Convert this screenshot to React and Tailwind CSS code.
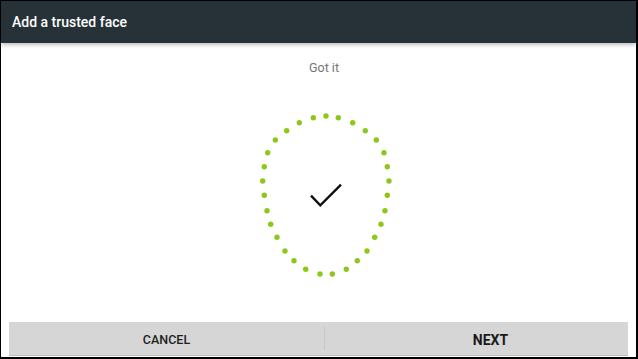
export default function App() {
  const dots = [
    [326, 116], [338.3, 117.7], [352.7, 122.7], [365.3, 130.7], [376.3, 140],
    [384, 152.7], [387.3, 166.7], [389, 181], [387.3, 195.3], [385, 210.7],
    [381, 224.3], [374.7, 237.3], [367, 251], [357.3, 260.7], [346.3, 269.3],
    [332.3, 274], [320, 274], [305.7, 269.3], [294, 260.7], [285, 251],
    [277, 237.3], [270.7, 224.3], [267, 210.7], [264.3, 195.3], [262.7, 181],
    [264.3, 166.7], [267.7, 152.7], [275.3, 140], [286.7, 130.7], [299.3, 122.7],
    [313.3, 117.7]
  ];

  return (
    <div
      className="w-[638px] h-[359px] flex flex-col bg-white border-t border-l border-r-2 border-b-2 border-black overflow-hidden"
      style={{ fontFamily: "Roboto, 'Liberation Sans', sans-serif" }}
    >
      {/* header */}
      <div className="h-[42px] shrink-0 bg-[#263238] flex items-center pl-[11px] pt-[1px] shadow-[0_2px_4px_rgba(0,0,0,0.25)] relative z-10">
        <span className="text-white text-[14px] font-medium">Add a trusted face</span>
      </div>

      {/* body */}
      <div className="flex-1 flex flex-col">
        <div className="mt-[17px] text-center text-[12.5px] leading-[16px] text-[#757575] pl-[11px]">
          Got it
        </div>

        <svg
          className="mt-[32px] ml-[254px] shrink-0"
          width="140"
          height="170"
          viewBox="255 108 140 170"
        >
          {dots.map(([x, y], i) => (
            <circle key={i} cx={x} cy={y} r="2.7" fill="#8cc81a" />
          ))}
          <polyline
            points="311,195.7 320.3,205.3 341,184.7"
            fill="none"
            stroke="#111"
            strokeWidth="2.4"
          />
        </svg>

        <div className="flex-1" />

        {/* buttons */}
        <div className="mx-[8px] mb-[1px] h-[34px] flex bg-[#d6d6d6] border-b border-[#bcbcbc]">
          <button className="w-[315px] flex items-center justify-center pt-[3px] text-[12.5px] font-medium text-[#1e1e1e]">
            CANCEL
          </button>
          <div className="w-px my-[5px] bg-[#c6c6c6]" />
          <button className="flex-1 flex items-center justify-center pt-[3px] pl-[28px] text-[14px] font-bold text-[#1a1a1a]">
            NEXT
          </button>
        </div>
      </div>
    </div>
  );
}
